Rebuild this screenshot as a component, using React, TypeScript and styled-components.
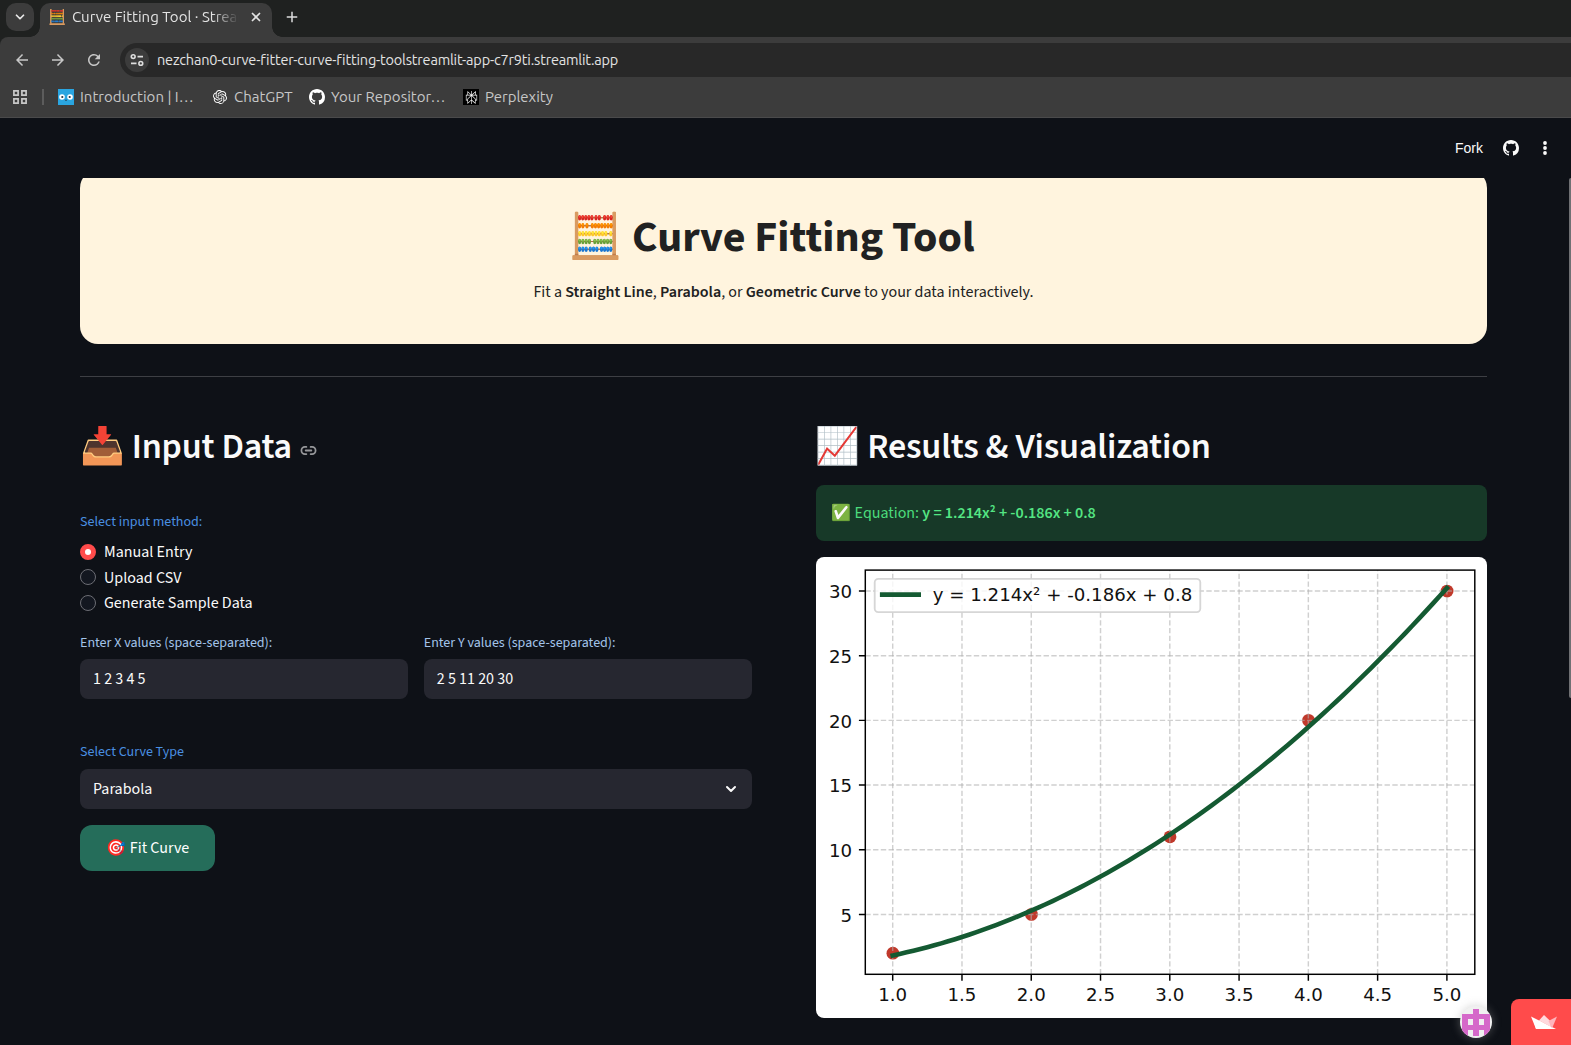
import React from 'react';
import styled, { createGlobalStyle, css } from 'styled-components';
import { ChevronDown, Link2, X } from 'lucide-react';
import { SiOpenai, SiPerplexity } from 'react-icons/si';
import { MdArrowBack, MdArrowForward, MdRefresh, MdAdd } from 'react-icons/md';

const sans = '"Source Sans 3", "Source Sans Pro", "Noto Sans CJK SC", "Noto Color Emoji", sans-serif';
const chromeFont = 'Ubuntu, "Noto Sans", "Noto Color Emoji", sans-serif';

const GlobalStyle = createGlobalStyle`
  *, *::before, *::after { box-sizing: border-box; }
  body { margin: 0; background: #0e1117; overflow: hidden; }
`;

const Window = styled.div`
  position: relative;
  display: flex;
  flex-direction: column;
  width: 1571px;
  height: 1045px;
  overflow: hidden;
  background: #0e1117;
  color: #fafafa;
  font: 400 16px/1.6 ${sans};
  svg { display: block; flex: none; }
`;

/* ---------- Browser chrome ---------- */

const TabStrip = styled.div`
  display: flex;
  height: 37px;
  padding: 3px 6px 0;
  background: #1f2120;
  font: 400 15px/28px ${chromeFont};
`;

const TabSearch = styled.div`
  display: grid;
  place-items: center;
  width: 28px;
  height: 28px;
  border-radius: 10px;
  background: #3c3c3c;
  color: #e8e8e8;
`;

const Tab = styled.div`
  position: relative;
  display: flex;
  align-items: center;
  width: 232px;
  height: 34px;
  margin-left: 6px;
  padding: 0 8px 6px 9px;
  border-radius: 10px 10px 0 0;
  background: #3c3c3c;
  color: #e3e3e3;
  &::before, &::after {
    content: '';
    position: absolute;
    bottom: 0;
    width: 10px;
    height: 10px;
  }
  &::before { left: -10px; background: radial-gradient(circle at 0 0, transparent 9.5px, #3c3c3c 10px); }
  &::after { right: -10px; background: radial-gradient(circle at 100% 0, transparent 9.5px, #3c3c3c 10px); }
`;

const Favicon = styled.span`
  flex: none;
  width: 18px;
  margin: 0 6px 0 -1px;
  font-size: 14.6px;
  line-height: 28px;
`;

const TabTitle = styled.span`
  flex: none;
  width: 167px;
  margin-right: 10px;
  overflow: hidden;
  white-space: nowrap;
  mask-image: linear-gradient(to right, #000 140px, transparent 167px);
`;

const NewTab = styled.div`
  display: grid;
  place-items: center;
  width: 28px;
  height: 28px;
  margin-left: 6px;
  color: #dcdcdc;
`;

const ToolbarBack = styled.div`
  background: #1f2120;
`;

const Toolbar = styled.div`
  height: 81px;
  border-top-left-radius: 8px;
  border-bottom: 1px solid #4a4a4b;
  background: #3c3c3c;
`;

const NavRow = styled.div`
  display: flex;
  align-items: center;
  height: 46px;
  padding: 0 0 0 13px;
`;

const NavIcon = styled.div`
  display: grid;
  place-items: center;
  width: 18px;
  margin-right: 18px;
  color: #c7c7c7;
`;

const Omnibox = styled.div`
  display: flex;
  flex: 1;
  align-items: center;
  height: 34px;
  margin-left: -1px;
  padding-left: 5px;
  border-radius: 17px 0 0 17px;
  background: #282828;
  color: #e3e3e3;
  font: 400 14.5px/34px ${chromeFont};
  letter-spacing: -0.19px;
`;

const SiteInfo = styled.div`
  display: grid;
  place-items: center;
  width: 24px;
  height: 24px;
  margin-right: 8px;
  border-radius: 50%;
  background: #3c3c3c;
`;

const Bookmarks = styled.div`
  display: flex;
  align-items: center;
  height: 28px;
  padding-left: 13px;
  color: #c7c7c7;
  font: 400 15px/28px ${chromeFont};
`;

const Separator = styled.div`
  width: 2px;
  height: 16px;
  margin: 0 14px 0 15px;
  background: #5c5c5c;
`;

const Bookmark = styled.div<{ $width: number }>`
  display: flex;
  align-items: center;
  gap: 6px;
  width: ${(p) => p.$width}px;
  white-space: nowrap;
`;

const BookmarkIcon = styled.span<{ $bg?: string }>`
  display: grid;
  place-items: center;
  width: 16px;
  height: 16px;
  background: ${(p) => p.$bg ?? 'transparent'};
  color: #fff;
`;

/* ---------- Streamlit page ---------- */

const AppHeader = styled.header`
  display: flex;
  flex: none;
  align-items: center;
  justify-content: flex-end;
  height: 60px;
  padding-right: 17px;
  font: 400 14px/20px "Liberation Sans", Arial, sans-serif;
  color: #fafafa;
`;

const HeaderIcon = styled.span<{ $gap: number }>`
  margin-left: ${(p) => p.$gap}px;
`;

const Main = styled.main`
  flex: 1;
  min-height: 0;
  padding: 0 84px 0 80px;
  overflow: hidden;
`;

const Banner = styled.section`
  height: 174px;
  margin-top: -8px;
  padding-top: 29px;
  border-radius: 18px;
  background: #fff4de;
  color: #212121;
  text-align: center;
`;

const Title = styled.h1`
  margin: 0;
  padding-right: 24px;
  font: 700 44px/78px ${sans};
`;

const Subtitle = styled.p`
  margin: 2px 0 0;
  line-height: 26px;
  b { font-weight: 600; }
`;

const Divider = styled.hr`
  height: 1px;
  margin: 32px 0;
  border: 0;
  background: rgba(250, 250, 250, 0.2);
`;

const Columns = styled.div<{ $gap: number }>`
  display: grid;
  grid-template-columns: 1fr 1fr;
  gap: ${(p) => p.$gap}px;
`;

const Heading = styled.h2`
  display: flex;
  align-items: center;
  height: 76px;
  margin: 0;
  font: 600 36px/44px ${sans};
  letter-spacing: -0.18px;
  white-space: pre;
  svg { margin: 6px 0 0 8px; color: #97989b; }
`;

const Label = styled.div<{ $height: number; $soft?: boolean }>`
  height: ${(p) => p.$height}px;
  font-size: 14px;
  line-height: 21px;
  color: ${(p) => (p.$soft ? '#a3c4ea' : '#4a90e2')};
`;

const Options = styled.div`
  display: flex;
  flex-direction: column;
  margin-bottom: 16.2px;
`;

const Option = styled.label`
  display: flex;
  align-items: center;
  gap: 8px;
  height: 25.6px;
`;

const Radio = styled.span<{ $checked?: boolean }>`
  width: 16px;
  height: 16px;
  margin-bottom: 2px;
  border-radius: 50%;
  ${(p) =>
    p.$checked
      ? css`border: 5px solid #ff4b4b; background: #fff;`
      : css`border: 1px solid #6c6d74; background: #131720;`}
`;

const Field = styled.div`
  display: flex;
  align-items: center;
  justify-content: space-between;
  height: 40px;
  padding: 1px 13px 0;
  border-radius: 8px;
  background: #262730;
`;

const FitButton = styled.button`
  width: 135px;
  height: 46px;
  margin-top: 16px;
  padding: 0 0 0 1px;
  border: 0;
  border-radius: 12px;
  background: #256d5a;
  color: #fff;
  font: 400 16px/24px ${sans};
`;

const Section = styled.div<{ $top: number }>`
  margin-top: ${(p) => p.$top}px;
`;

const Alert = styled.div`
  height: 56px;
  margin-bottom: 16px;
  padding: 15px 16px;
  border-radius: 8px;
  background: #173928;
  color: #4cdc7c;
  line-height: 26px;
  b { font-weight: 600; color: #54e583; }
`;

const ChartCard = styled.div`
  height: 461px;
  overflow: hidden;
  border-radius: 8px;
  background: #fff;
`;

const Scrollbar = styled.div`
  position: absolute;
  top: 178px;
  right: 0;
  width: 2px;
  height: 520px;
  border-radius: 2px 0 0 2px;
  background: #6f7073;
`;

const Avatar = styled.div`
  position: absolute;
  left: 1460px;
  top: 1006px;
  width: 32px;
  height: 32px;
  overflow: hidden;
  border-radius: 50%;
  background: #f0f0f0;
  box-shadow: 0 0 10px rgba(160, 160, 160, 0.45);
`;

const HostBadge = styled.div`
  position: absolute;
  right: 0;
  bottom: 0;
  display: flex;
  width: 60px;
  height: 46px;
  padding: 16px 0 0 20px;
  border-top-left-radius: 8px;
  background: #ff4b4b;
`;

/* ---------- Icons ---------- */

function GithubMark() {
  return (
    <svg width="16" height="16" viewBox="0 0 16 16" fill="currentColor">
      <path d="M8 0C3.58 0 0 3.58 0 8c0 3.54 2.29 6.53 5.47 7.59.4.07.55-.17.55-.38 0-.19-.01-.82-.01-1.49-2.01.37-2.53-.49-2.69-.94-.09-.23-.48-.94-.82-1.13-.28-.15-.68-.52-.01-.53.63-.01 1.08.58 1.23.82.72 1.21 1.87.87 2.33.66.07-.52.28-.87.51-1.07-1.78-.2-3.64-.89-3.64-3.95 0-.87.31-1.59.82-2.15-.08-.2-.36-1.02.08-2.12 0 0 .67-.21 2.2.82.64-.18 1.32-.27 2-.27.68 0 1.36.09 2 .27 1.53-1.04 2.2-.82 2.2-.82.44 1.1.16 1.92.08 2.12.51.56.82 1.27.82 2.15 0 3.07-1.87 3.75-3.65 3.95.29.25.54.73.54 1.48 0 1.07-.01 1.93-.01 2.2 0 .21.15.46.55.38A8.013 8.013 0 0 0 16 8c0-4.42-3.58-8-8-8z" />
    </svg>
  );
}

function MoreDots() {
  return (
    <svg width="18" height="18" fill="currentColor">
      <circle cx="9" cy="4" r="1.9" />
      <circle cx="9" cy="9" r="1.9" />
      <circle cx="9" cy="14" r="1.9" />
    </svg>
  );
}

/* ---------- Chart ---------- */

const sx = (v: number) => 76.7 + (v - 1) * 138.55;
const sy = (v: number) => 357.4 - (v - 5) * 12.935;
const fit = (x: number) => 1.2143 * x * x - 0.1857 * x + 0.8;
const xTicks = [1, 1.5, 2, 2.5, 3, 3.5, 4, 4.5, 5];
const yTicks = [5, 10, 15, 20, 25, 30];
const points = [[1, 2], [2, 5], [3, 11], [4, 20], [5, 30]];
const curve = Array.from({ length: 81 }, (_, i) => 1 + i / 20)
  .map((x) => `${sx(x).toFixed(2)},${sy(fit(x)).toFixed(2)}`)
  .join(' ');
const box = { left: 49.3, right: 658.8, top: 13.1, bottom: 417.3 };

function Chart() {
  return (
    <svg width="671.5" height="461" fontFamily='"DejaVu Sans", sans-serif' fontSize="18.2" fill="#111">
      {points.map(([x, y]) => (
        <circle key={x} cx={sx(x) + 0.2} cy={sy(y)} r="6.4" fill="#c0392b" />
      ))}
      <g stroke="#b0b0b0" strokeOpacity="0.6" strokeWidth="1.46" strokeDasharray="5.4 2.35">
        {xTicks.map((v) => <line key={v} x1={sx(v)} x2={sx(v)} y1={box.bottom} y2={box.top} />)}
        {yTicks.map((v) => <line key={v} x1={box.left} x2={box.right} y1={sy(v)} y2={sy(v)} />)}
      </g>
      <polyline points={curve} fill="none" stroke="#145a32" strokeWidth="4.6" strokeLinecap="square" />
      <g stroke="#000" strokeWidth="1.46" fill="none">
        <rect x={box.left} y={box.top} width={box.right - box.left} height={box.bottom - box.top} />
        {xTicks.map((v) => <line key={v} x1={sx(v)} x2={sx(v)} y1={box.bottom} y2={box.bottom + 6.4} />)}
        {yTicks.map((v) => <line key={v} x1={box.left - 6.4} x2={box.left} y1={sy(v)} y2={sy(v)} />)}
      </g>
      {xTicks.map((v) => (
        <text key={v} x={sx(v)} y="443.6" textAnchor="middle">{v.toFixed(1)}</text>
      ))}
      {yTicks.map((v) => (
        <text key={v} x="36.2" y={sy(v) + 7.2} textAnchor="end">{v}</text>
      ))}
      <rect x="58.7" y="21.8" width="325.6" height="33.4" rx="3.6" fill="#fff" fillOpacity="0.8" stroke="#ccc" strokeOpacity="0.8" strokeWidth="1.83" />
      <line x1="63.9" x2="105" y1="37.6" y2="37.6" stroke="#145a32" strokeWidth="4.6" />
      <text x="116.7" y="43.7">y = 1.214x² + -0.186x + 0.8</text>
    </svg>
  );
}

const identicon = ['..#..', '#####', '#.#.#', '#####', '#.#.#'];

function Identicon() {
  return (
    <svg width="32" height="32" fill="#d568c9" shapeRendering="crispEdges">
      {identicon.flatMap((row, r) =>
        [...row].map((c, i) =>
          c === '#' ? <rect key={`${r}-${i}`} x={2.4 + i * 5.5} y={2.6 + r * 5.4} width="5.5" height="5.4" /> : null,
        ),
      )}
    </svg>
  );
}

const options = ['Manual Entry', 'Upload CSV', 'Generate Sample Data'];

export default function App() {
  return (
    <Window>
      <GlobalStyle />
      <TabStrip>
        <TabSearch><ChevronDown size={14} strokeWidth={3} /></TabSearch>
        <Tab>
          <Favicon>🧮</Favicon>
          <TabTitle>Curve Fitting Tool · Streamlit</TabTitle>
          <X size={14} strokeWidth={3} />
        </Tab>
        <NewTab><MdAdd size={18} /></NewTab>
      </TabStrip>
      <ToolbarBack>
        <Toolbar>
          <NavRow>
            <NavIcon><MdArrowBack size={18} /></NavIcon>
            <NavIcon><MdArrowForward size={18} /></NavIcon>
            <NavIcon><MdRefresh size={18} /></NavIcon>
            <Omnibox>
              <SiteInfo>
                <svg width="14" height="14" fill="none" stroke="#dedede" strokeWidth="1.6">
                  <circle cx="3.2" cy="3.6" r="1.9" />
                  <path d="M7.5 3.6H13M1 10.4h5.5" />
                  <circle cx="10.8" cy="10.4" r="1.9" />
                </svg>
              </SiteInfo>
              nezchan0-curve-fitter-curve-fitting-toolstreamlit-app-c7r9ti.streamlit.app
            </Omnibox>
          </NavRow>
          <Bookmarks>
            <svg width="14" height="14" fill="none" stroke="#c7c7c7" strokeWidth="1.7">
              <path d="M.9.9h4.2v4.2H.9zM8.9.9h4.2v4.2H8.9zM.9 8.9h4.2v4.2H.9zM8.9 8.9h4.2v4.2H8.9z" />
            </svg>
            <Separator />
            <Bookmark $width={154}>
              <BookmarkIcon $bg="#2aa5e0">
                <svg width="16" height="16">
                  <circle cx="4" cy="8" r="2.8" fill="#fff" />
                  <circle cx="12" cy="8" r="2.8" fill="#fff" />
                  <circle cx="4.3" cy="8" r="1.1" fill="#234" />
                  <circle cx="11.7" cy="8" r="1.1" fill="#234" />
                  <path d="M7 11q1 1 2 0" fill="none" stroke="#234" strokeWidth=".8" />
                </svg>
              </BookmarkIcon>
              Introduction | I…
            </Bookmark>
            <Bookmark $width={97}>
              <BookmarkIcon><SiOpenai size={14} /></BookmarkIcon>
              ChatGPT
            </Bookmark>
            <Bookmark $width={154}>
              <BookmarkIcon><GithubMark /></BookmarkIcon>
              Your Repositor…
            </Bookmark>
            <Bookmark $width={100}>
              <BookmarkIcon $bg="#000"><SiPerplexity size={13} /></BookmarkIcon>
              Perplexity
            </Bookmark>
          </Bookmarks>
        </Toolbar>
      </ToolbarBack>

      <AppHeader>
        Fork
        <HeaderIcon $gap={20}><GithubMark /></HeaderIcon>
        <HeaderIcon $gap={17}><MoreDots /></HeaderIcon>
      </AppHeader>

      <Main>
        <Banner>
          <Title>🧮 Curve Fitting Tool</Title>
          <Subtitle>
            Fit a <b>Straight Line</b>, <b>Parabola</b>, or <b>Geometric Curve</b> to your data interactively.
          </Subtitle>
        </Banner>
        <Divider />
        <Columns $gap={64}>
          <div>
            <Heading>📥 Input Data<Link2 size={17} strokeWidth={2.5} /></Heading>
            <Section $top={27}>
              <Label $height={28}>Select input method:</Label>
              <Options>
                {options.map((name, i) => (
                  <Option key={name}><Radio $checked={i === 0} />{name}</Option>
                ))}
              </Options>
            </Section>
            <Columns $gap={16}>
              <div>
                <Label $height={26} $soft>Enter X values (space-separated):</Label>
                <Field>1 2 3 4 5</Field>
              </div>
              <div>
                <Label $height={26} $soft>Enter Y values (space-separated):</Label>
                <Field>2 5 11 20 30</Field>
              </div>
            </Columns>
            <Section $top={43}>
              <Label $height={27}>Select Curve Type</Label>
              <Field>Parabola<ChevronDown size={16} strokeWidth={3} /></Field>
            </Section>
            <FitButton>🎯 Fit Curve</FitButton>
          </div>
          <div>
            <Heading>📈 Results &amp; Visualization</Heading>
            <Alert>✅ Equation: <b>y = 1.214x² + -0.186x + 0.8</b></Alert>
            <ChartCard><Chart /></ChartCard>
          </div>
        </Columns>
      </Main>

      <Scrollbar />
      <Avatar><Identicon /></Avatar>
      <HostBadge>
        <svg width="26" height="15">
          <path d="M0 1.5L8 5.5L25 14H5z" fill="#fff" />
          <path d="M8 5.5L13 0l6.5 6.2L20 12z" fill="#ffd9dd" />
          <path d="M26 1.5L21 13.5L17.5 6z" fill="#ffb3bb" />
          <path d="M3.5 8.5L8 5.5L22 14H5z" fill="#fff" />
        </svg>
      </HostBadge>
    </Window>
  );
}
